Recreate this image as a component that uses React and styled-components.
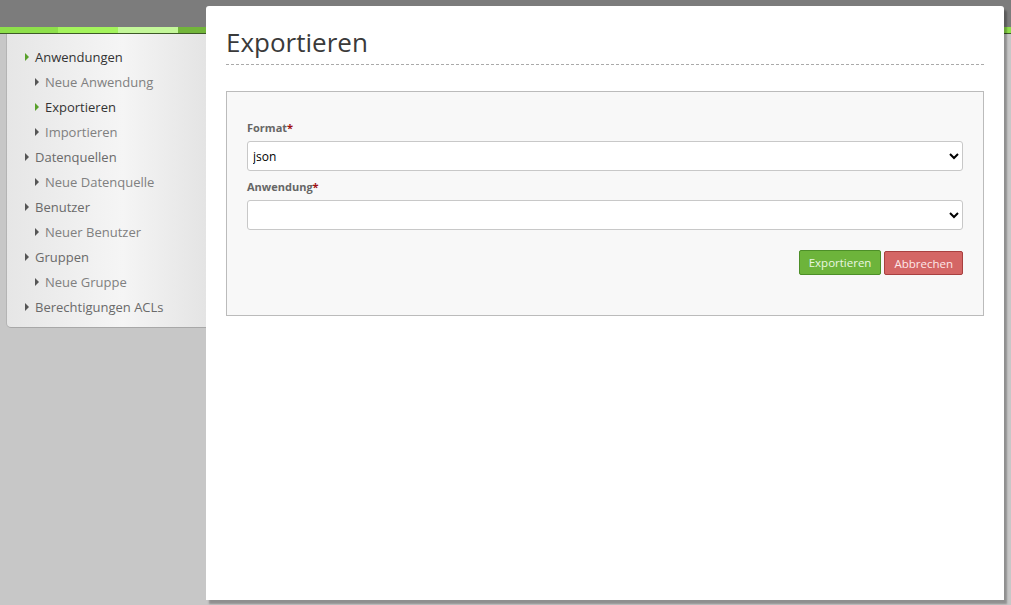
import React from 'react'
import styled, { createGlobalStyle } from 'styled-components'

const GlobalStyle = createGlobalStyle`
    html, body {
        margin: 0;
        padding: 0;
        height: 100%;
        overflow: hidden;
    }
    body {
        background: #c7c7c7;
        font-family: "Open Sans", "Liberation Sans", sans-serif;
    }
`

const Page = styled.div`
    position: relative;
    width: 100%;
    height: 605px;
`

const TopBar = styled.div`
    height: 27px;
    background: #7c7c7c;
`

const Stripe = styled.div`
    height: 6px;
    border-bottom: 1px solid #3e5a28;
    background: repeating-linear-gradient(
        to right,
        #8ee04b 0 58px,
        #a4f45c 58px 118px,
        #c4f79a 118px 178px,
        #72b53a 178px 240px
    );
`

const Sidebar = styled.nav`
    margin-left: 6px;
    width: 210px;
    height: 294px;
    box-sizing: border-box;
    padding-top: 10px;
    background: linear-gradient(to right, #e6e6e6 0%, #f5f5f5 55%, #e2e2e2 100%);
    border-left: 1px solid #b4b4b4;
    border-bottom: 1px solid #a8a8a8;
    border-bottom-left-radius: 5px;
`

const NavItem = styled.div`
    display: flex;
    align-items: center;
    height: 25px;
    padding-left: ${p => (p.$sub ? 28 : 18)}px;
    font-size: 13px;
    color: ${p => (p.$active ? '#333' : p.$sub ? '#808080' : '#6a6a6a')};
`

const Arrow = styled.span`
    width: 0;
    height: 0;
    margin-right: 6px;
    border-top: 4px solid transparent;
    border-bottom: 4px solid transparent;
    border-left: 4px solid ${p => (p.$active ? '#58a02a' : '#555')};
`

const Modal = styled.div`
    position: absolute;
    top: 6px;
    left: 206px;
    width: 798px;
    height: 594px;
    box-sizing: border-box;
    padding: 0 20px;
    background: #fff;
    border-radius: 3px 3px 0 0;
    box-shadow: 3px 4px 2px rgba(0, 0, 0, 0.28);
`

const Title = styled.h1`
    margin: 0;
    padding-top: 19px;
    height: 59px;
    box-sizing: border-box;
    border-bottom: 1px dashed #aaa;
    font-size: 26px;
    font-weight: 400;
    line-height: 34px;
    color: #3a3a3a;
`

const FormBox = styled.div`
    margin-top: 26px;
    height: 225px;
    box-sizing: border-box;
    padding: 27px 20px 0;
    background: #f8f8f8;
    border: 1px solid #bbb;
`

const Label = styled.label`
    display: block;
    height: 22px;
    line-height: 18px;
    font-size: 11px;
    font-weight: 700;
    color: #666;
`

const Required = styled.span`
    color: #a01010;
`

const Select = styled.select`
    display: block;
    width: 100%;
    height: 30px;
    margin-bottom: 7px;
    padding: 0 1px;
    box-sizing: border-box;
    background: #fff;
    border: 1px solid #c8c8c8;
    border-radius: 3px;
    font-family: "Open Sans", "Liberation Sans", sans-serif;
    font-size: 12px;
    color: #000;
`

const Actions = styled.div`
    display: flex;
    justify-content: flex-end;
    gap: 3px;
    margin-top: 20px;
`

const Button = styled.button`
    height: ${p => (p.$danger ? 24 : 25)}px;
    margin-top: ${p => (p.$danger ? 1 : 0)}px;
    padding: 0 9px;
    border-radius: 2px;
    font-family: "Open Sans", "Liberation Sans", sans-serif;
    font-size: 11.5px;
    background: ${p => (p.$danger ? '#d46665' : '#6db43b')};
    border: 1px solid ${p => (p.$danger ? '#a84040' : '#4d8f28')};
    color: ${p => (p.$danger ? '#fde8e8' : '#eaf7e0')};
`

const nav = [
    { label: 'Anwendungen', active: true },
    { label: 'Neue Anwendung', sub: true },
    { label: 'Exportieren', sub: true, active: true },
    { label: 'Importieren', sub: true },
    { label: 'Datenquellen' },
    { label: 'Neue Datenquelle', sub: true },
    { label: 'Benutzer' },
    { label: 'Neuer Benutzer', sub: true },
    { label: 'Gruppen' },
    { label: 'Neue Gruppe', sub: true },
    { label: 'Berechtigungen ACLs' },
]

export default function App() {
    return (
        <Page>
            <GlobalStyle />
            <TopBar />
            <Stripe />
            <Sidebar>
                {nav.map(item => (
                    <NavItem key={item.label} $sub={item.sub} $active={item.active}>
                        <Arrow $active={item.active} />
                        {item.label}
                    </NavItem>
                ))}
            </Sidebar>
            <Modal>
                <Title>Exportieren</Title>
                <FormBox>
                    <Label>Format<Required>*</Required></Label>
                    <Select defaultValue="json">
                        <option value="json">json</option>
                        <option value="xml">xml</option>
                    </Select>
                    <Label>Anwendung<Required>*</Required></Label>
                    <Select defaultValue="">
                        <option value=""></option>
                    </Select>
                    <Actions>
                        <Button>Exportieren</Button>
                        <Button $danger>Abbrechen</Button>
                    </Actions>
                </FormBox>
            </Modal>
        </Page>
    )
}
